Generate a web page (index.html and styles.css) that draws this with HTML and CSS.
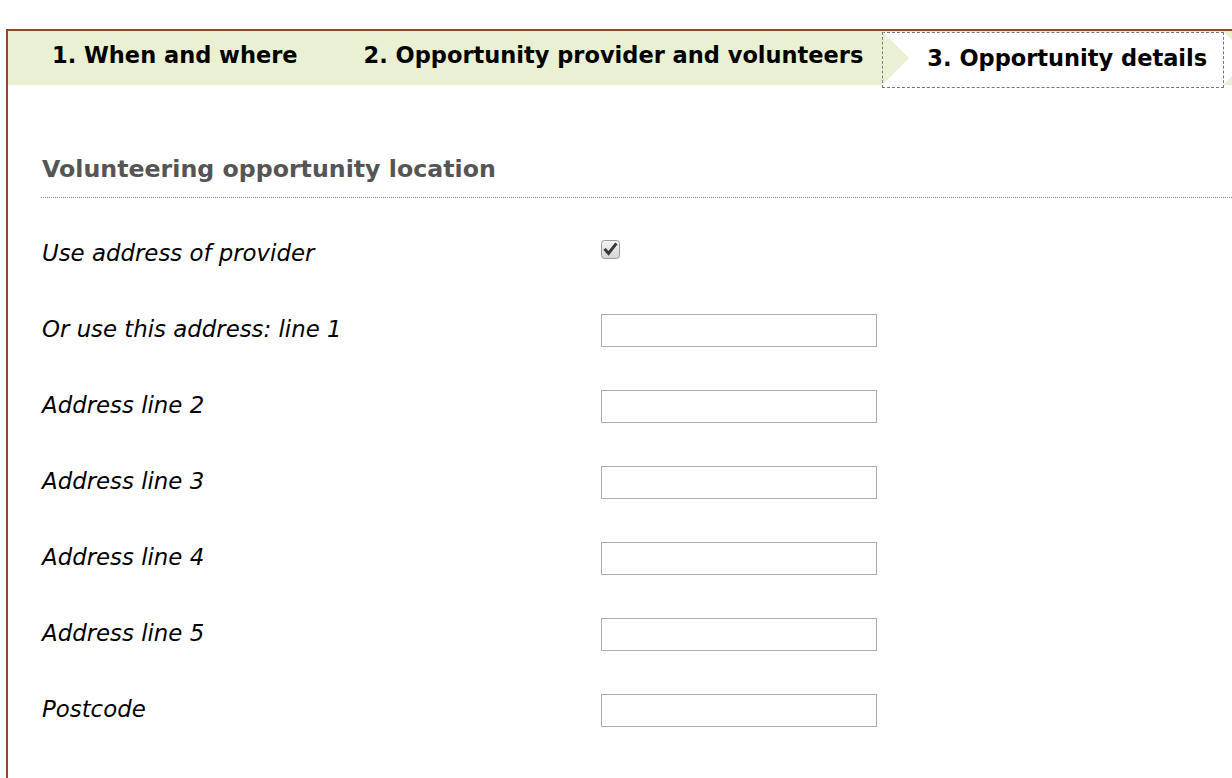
FILE: index.html
```html
<!DOCTYPE html>
<html lang="en">
<head>
<meta charset="utf-8">
<title>Opportunity details</title>
<link rel="stylesheet" href="styles.css">
</head>
<body>
<div class="page">
  <ul class="tabs">
    <li class="tab tab-1">1. When and where</li>
    <li class="tab tab-2">2. Opportunity provider and volunteers</li>
    <li class="tab tab-3">3. Opportunity details</li>
  </ul>
  <div class="content">
    <h2 class="section-title">Volunteering opportunity location</h2>
    <div class="field">
      <label class="field-label">Use address of provider</label>
      <span class="checkbox">
        <svg width="19" height="19" viewBox="0 0 19 19">
          <defs>
            <linearGradient id="cbg" x1="0" y1="0" x2="0" y2="1">
              <stop offset="0" stop-color="#f4f4f4"/>
              <stop offset="1" stop-color="#d4d4d4"/>
            </linearGradient>
          </defs>
          <rect x="0.5" y="0.5" width="18" height="18" rx="3" fill="url(#cbg)" stroke="#9a9a9a"/>
          <path d="M4.5 10 L7.5 13.5 L14.5 4.5" fill="none" stroke="#383838" stroke-width="3" stroke-linecap="square"/>
        </svg>
      </span>
    </div>
    <div class="field">
      <label class="field-label">Or use this address: line 1</label>
      <input class="text-input" type="text">
    </div>
    <div class="field">
      <label class="field-label">Address line 2</label>
      <input class="text-input" type="text">
    </div>
    <div class="field">
      <label class="field-label">Address line 3</label>
      <input class="text-input" type="text">
    </div>
    <div class="field">
      <label class="field-label">Address line 4</label>
      <input class="text-input" type="text">
    </div>
    <div class="field">
      <label class="field-label">Address line 5</label>
      <input class="text-input" type="text">
    </div>
    <div class="field">
      <label class="field-label">Postcode</label>
      <input class="text-input" type="text">
    </div>
  </div>
</div>
</body>
</html>
```

FILE: styles.css
```css
html, body {
  margin: 0;
  padding: 0;
  background: #fff;
}

body {
  overflow: hidden;
  font-family: "DejaVu Sans", Verdana, sans-serif;
  color: #000;
}

.page {
  margin: 29px 0 0 6px;
  width: 1320px;
  height: 800px;
  border-top: 2px solid #8b4b2b;
  border-left: 2px solid #8b4b2b;
}

.tabs {
  display: flex;
  list-style: none;
  margin: 0;
  padding: 0;
  height: 54px;
  background: #eaf1d3;
}

.tab {
  position: relative;
  display: flex;
  align-items: center;
  box-sizing: border-box;
  font-weight: bold;
  font-size: 22.5px;
  white-space: nowrap;
}

.tab-1 {
  padding: 0 33px 6px 44px;
}

.tab-2 {
  padding: 0 19px 6px 33px;
}

.tab-2::after {
  content: "";
  position: absolute;
  right: -27px;
  top: 1px;
  z-index: 2;
  border-left: 26px solid #eaf1d3;
  border-top: 26.5px solid transparent;
  border-bottom: 26.5px solid transparent;
}

.tab-3 {
  align-self: flex-start;
  height: 56px;
  margin-top: 1px;
  padding: 0 16px 5px 44px;
  background: #fff;
  border: 1px dashed #777;
}

.tab-3::after {
  content: "";
  position: absolute;
  right: -27px;
  top: -1px;
  border-left: 26px solid #fff;
  border-top: 26.5px solid transparent;
  border-bottom: 26.5px solid transparent;
}

.content {
  padding: 0 0 0 33px;
}

.section-title {
  margin: 70px 0 0;
  padding: 0 0 14px 1px;
  height: 28px;
  font-size: 23.7px;
  line-height: 28px;
  font-weight: bold;
  color: #555;
  border-bottom: 1px dotted #888;
}

.section-title + .field {
  margin-top: 18px;
}

.field {
  display: flex;
  align-items: center;
  height: 76px;
}

.field-label {
  width: 560px;
  flex: none;
  box-sizing: border-box;
  padding: 0 0 2px 1px;
  font-style: italic;
  font-size: 22.85px;
  color: #000;
}

.checkbox {
  display: block;
  width: 19px;
  height: 19px;
  margin-bottom: 9px;
}

.checkbox svg {
  display: block;
}

.text-input {
  box-sizing: border-box;
  width: 276px;
  height: 33px;
  margin: 0;
  padding: 0 4px;
  border: 1px solid #aaa;
  background: #fff;
  font: inherit;
}
```
